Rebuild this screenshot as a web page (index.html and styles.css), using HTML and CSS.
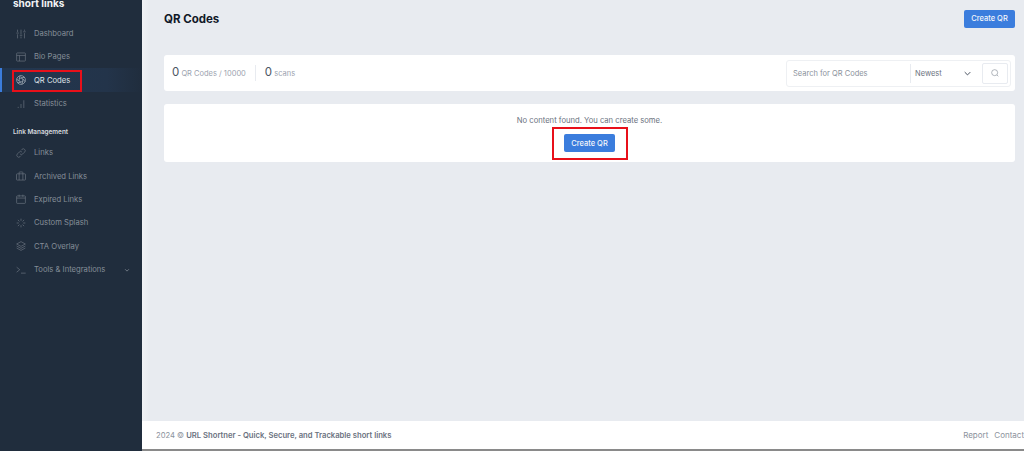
FILE: index.html
```html
<!DOCTYPE html>
<html lang="en">
<head>
    <meta charset="UTF-8">
    <meta name="viewport" content="width=device-width, initial-scale=1.0">
    <title>QR Codes</title>
    <link rel="stylesheet" href="styles.css">
</head>
<body>
    <div class="app">
        <!-- Sidebar -->
        <aside class="sidebar">
            <div class="brand">short links</div>
            <nav class="side-nav">
                <a class="side-link">
                    <svg class="side-icon" viewBox="0 0 16 16"><path d="M2.5 1v4M2.5 8.5V15M.5 6.5h4M8 1v7.5M8 12v3M6 10h4M13.5 1v2M13.5 6.5V15M11.5 4.5h4"/></svg>
                    <span>Dashboard</span>
                </a>
                <a class="side-link">
                    <svg class="side-icon" viewBox="0 0 16 16"><rect x="1" y="1.5" width="14" height="13" rx="1"/><path d="M1 5.5h14M5.5 5.5v9"/></svg>
                    <span>Bio Pages</span>
                </a>
                <a class="side-link is-active">
                    <svg class="side-icon" viewBox="0 0 16 16"><circle cx="8" cy="8" r="7"/><path d="M8 4.6 11 6.3V9.7L8 11.4 5 9.7V6.3zM8 4.6 13.6 3.7M11 6.3l3.6 4.4M11 9.7l-1.6 5.1M8 11.4 2.6 12.6M5 9.7 1 6.6M5 6.3 6.6 1.2"/></svg>
                    <span>QR Codes</span>
                </a>
                <a class="side-link">
                    <svg class="side-icon" viewBox="0 0 16 16"><path d="M3.5 14.5v-2M8 14.5V8M12.5 14.5V2"/></svg>
                    <span>Statistics</span>
                </a>
            </nav>
            <div class="side-title">Link Management</div>
            <nav class="side-nav">
                <a class="side-link">
                    <svg class="side-icon" viewBox="0 0 16 16"><path d="M6.5 9.5a3 3 0 0 0 4.3 0l3-3a3 3 0 0 0-4.3-4.3L8 3.7M9.5 6.5a3 3 0 0 0-4.3 0l-3 3a3 3 0 0 0 4.3 4.3L8 12.3"/></svg>
                    <span>Links</span>
                </a>
                <a class="side-link">
                    <svg class="side-icon" viewBox="0 0 16 16"><rect x=".8" y="4.5" width="14.4" height="10" rx="1"/><path d="M5 14.5v-10M11 14.5v-10M5 4.5V2.5a1 1 0 0 1 1-1h4a1 1 0 0 1 1 1v2"/></svg>
                    <span>Archived Links</span>
                </a>
                <a class="side-link">
                    <svg class="side-icon" viewBox="0 0 16 16"><rect x="1" y="3" width="14" height="12" rx="1"/><path d="M1 6.5h14M5 1v3.5M11 1v3.5"/></svg>
                    <span>Expired Links</span>
                </a>
                <a class="side-link">
                    <svg class="side-icon" viewBox="0 0 16 16"><path d="M8 1v3.5M8 11.5V15M1 8h3.5M11.5 8H15M3 3l2.5 2.5M10.5 10.5 13 13M13 3l-2.5 2.5M5.5 10.5 3 13"/></svg>
                    <span>Custom Splash</span>
                </a>
                <a class="side-link">
                    <svg class="side-icon" viewBox="0 0 16 16"><path d="M8 1 15 4.8 8 8.6 1 4.8zM1 8 8 11.8 15 8M1 11.2 8 15l7-3.8"/></svg>
                    <span>CTA Overlay</span>
                </a>
                <a class="side-link">
                    <svg class="side-icon" viewBox="0 0 16 16"><path d="m1 3.5 5 4-5 4M8 13h7.5"/></svg>
                    <span class="side-grow">Tools &amp; Integrations</span>
                    <svg class="side-caret" viewBox="0 0 8 8"><path d="m1.5 3 2.5 2.5L6.5 3"/></svg>
                </a>
            </nav>
        </aside>

        <!-- Main content -->
        <div class="main">
            <div class="content">
                <header class="page-head">
                    <h1>QR Codes</h1>
                    <button class="btn">Create QR</button>
                </header>

                <section class="card toolbar">
                    <div class="stats">
                        <div class="stat"><b>0</b> QR Codes / 10000</div>
                        <div class="stat stat-last"><b>0</b> scans</div>
                    </div>
                    <form class="filter">
                        <div class="filter-search">Search for QR Codes</div>
                        <div class="filter-sort">
                            <span>Newest</span>
                            <svg viewBox="0 0 10 6"><path d="m1 1 4 4 4-4"/></svg>
                        </div>
                        <div class="filter-btn">
                            <svg viewBox="0 0 12 12"><circle cx="5.5" cy="5.5" r="4.5"/><path d="m9 9 2 2"/></svg>
                        </div>
                    </form>
                </section>

                <section class="card empty">
                    <p>No content found. You can create some.</p>
                    <button class="btn">Create QR</button>
                </section>
            </div>

            <footer class="footer">
                <div>2024 © <b>URL Shortner - Quick, Secure, and Trackable short links</b></div>
                <div class="footer-links"><a>Report</a><a>Contact</a></div>
            </footer>
        </div>
    </div>

    <!-- red annotation boxes on top of the screenshot -->
    <div class="mark mark-nav"></div>
    <div class="mark mark-btn"></div>
</body>
</html>
```

FILE: styles.css
```css
* {
    box-sizing: border-box;
}

html, body {
    height: 100%;
}

body {
    margin: 0;
    font-family: Inter, "Liberation Sans", sans-serif;
    font-size: 7.65px;
    color: #6b7280;
    background-color: #e8ebf0;
    overflow: hidden;
}

.app {
    display: flex;
    height: 449px;
}

/* Sidebar */
.sidebar {
    width: 142px;
    flex-shrink: 0;
    background-color: #202d3d;
    height: 451px;
}

.brand {
    height: 26.5px;
    padding-left: 13px;
    margin-top: -4px;
    margin-bottom: 1px;
    color: #f3f4f6;
    font-size: 10px;
    font-weight: 700;
    line-height: 14px;
}

.side-nav {
    display: flex;
    flex-direction: column;
    gap: 3.4px;
}

.side-link {
    display: flex;
    align-items: center;
    height: 20px;
    padding-left: 14px;
    padding-right: 12px;
    color: #858d98;
    border-left: 2px solid transparent;
}

.side-link span {
    margin-left: 8px;
}

.side-link .side-grow {
    flex: 1;
}

.side-link.is-active {
    height: 24px;
    margin: -2px 0;
    color: #dfe3e8;
    background: linear-gradient(to right, #22364f, #23344a 75%, #202d3d);
    border-left-color: #3b7ddd;
}

.side-icon {
    width: 10px;
    height: 10px;
    flex-shrink: 0;
    fill: none;
    stroke: currentColor;
    stroke-width: 1;
    opacity: 0.8;
}

.side-caret {
    width: 6px;
    height: 6px;
    fill: none;
    stroke: currentColor;
    stroke-width: 1;
}

.side-title {
    margin-top: 14px;
    margin-bottom: 7px;
    padding-left: 13px;
    color: #d5d9df;
    font-size: 6.4px;
    font-weight: 600;
}

/* Main */
.main {
    flex: 1;
    min-width: 0;
    display: flex;
    flex-direction: column;
}

.content {
    flex: 1;
    padding: 0 9px 0 22px;
    background: linear-gradient(to right, #f0f2f5, #e8ebf0 8px);
}

.page-head {
    display: flex;
    align-items: center;
    justify-content: space-between;
    height: 55px;
    padding-bottom: 18px;
}

.page-head h1 {
    margin: 0;
    color: #111827;
    font-size: 11.5px;
    font-weight: 700;
}

.btn {
    height: 18px;
    width: 51px;
    padding: 0;
    border: none;
    border-radius: 2px;
    background-color: #3b7ddd;
    color: #f3f6fb;
    font-family: inherit;
    font-size: 7.5px;
    font-weight: 500;
}

.card {
    background-color: #fff;
    border-radius: 3px;
}

.toolbar {
    display: flex;
    align-items: center;
    justify-content: space-between;
    height: 36px;
    padding: 0 4px 0 8px;
    margin-bottom: 13px;
}

.stats {
    display: flex;
    align-items: center;
    color: #9ca3af;
    font-size: 7.5px;
}

.stat {
    padding-right: 9.5px;
    margin-right: 8.5px;
    border-right: 1px solid #e8ebf0;
    line-height: 14px;
}

.stat-last {
    border-right: none;
}

.stat b {
    color: #4b5563;
    font-size: 11.5px;
    font-weight: 400;
}

.filter {
    display: flex;
    align-items: center;
    width: 225px;
    height: 27px;
    border: 1px solid #eef0f3;
    border-radius: 3px;
    font-size: 7.5px;
    color: #8b929c;
}

.filter-search {
    width: 124px;
    padding-left: 6px;
    line-height: 19px;
    border-right: 1px solid #e8ebf0;
}

.filter-sort {
    flex: 1;
    display: flex;
    align-items: center;
    justify-content: space-between;
    padding: 0 11px 0 4px;
    color: #6b7280;
}

.filter-sort svg {
    width: 7px;
    height: 5px;
    fill: none;
    stroke: #374151;
    stroke-width: 1.3;
}

.filter-btn {
    display: flex;
    align-items: center;
    justify-content: center;
    width: 26px;
    height: 21px;
    margin-right: 2px;
    border: 1px solid #e8ebf0;
    border-radius: 2px;
}

.filter-btn svg {
    width: 8px;
    height: 8px;
    fill: none;
    stroke: #8b929c;
    stroke-width: 1;
}

.empty {
    display: flex;
    flex-direction: column;
    align-items: center;
    height: 58px;
    padding-top: 12px;
}

.empty p {
    margin: 0 0 8px;
    line-height: 10px;
}

.footer {
    display: flex;
    align-items: center;
    justify-content: space-between;
    height: 28px;
    flex-shrink: 0;
    padding: 0 0 0 14px;
    background-color: #fff;
    color: #8b929c;
}

.footer b {
    color: #6b7280;
    font-weight: 600;
}

.footer-links {
    display: flex;
    gap: 6px;
    font-size: 8px;
}

/* Annotations */
.mark {
    position: absolute;
    border: 2px solid #e8101a;
}

.mark-nav {
    left: 12px;
    top: 70px;
    width: 70px;
    height: 22px;
}

.mark-btn {
    left: 552px;
    top: 127px;
    width: 76px;
    height: 33px;
}

body::after {
    content: "";
    position: absolute;
    left: 142px;
    right: 0;
    top: 449px;
    height: 2px;
    background-color: #8a8a8a;
}
```
